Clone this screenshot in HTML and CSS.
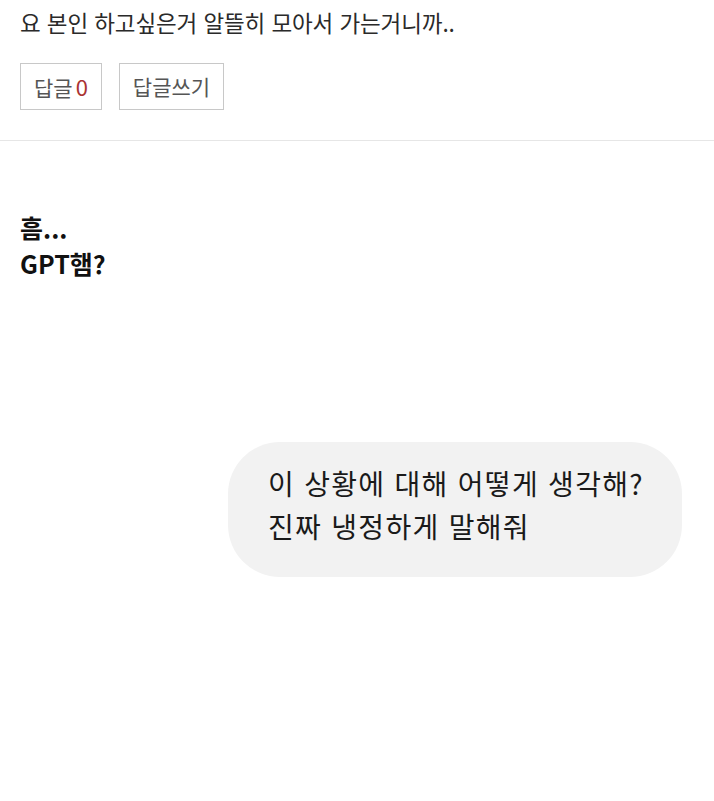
FILE: index.html
```html
<!DOCTYPE html>
<html lang="ko">
<head>
    <meta charset="UTF-8">
    <meta name="viewport" content="width=device-width, initial-scale=1.0">
    <title>답글</title>
    <link rel="stylesheet" href="styles.css">
</head>
<body>
    <div class="comment">
        <p class="comment-text">요 본인 하고싶은거 알뜰히 모아서 가는거니까..</p>
        <div class="comment-actions">
            <a href="#" class="btn">답글<span class="count">0</span></a>
            <a href="#" class="btn">답글쓰기</a>
        </div>
    </div>

    <div class="post">
        <p class="post-text">흠...<br>GPT햄?</p>

        <div class="chat">
            <div class="bubble">이 상황에 대해 어떻게 생각해?<br>진짜 냉정하게 말해줘</div>
        </div>
    </div>
</body>
</html>
```

FILE: styles.css
```css
html, body {
    margin: 0;
    padding: 0;
}
body {
    font-family: "Noto Sans CJK KR", "Noto Sans", sans-serif;
    background: white;
    color: #222;
}
.comment {
    padding: 0 20px;
    border-bottom: 1px solid #e6e6e6;
    height: 140px;
}
.comment-text {
    margin: 0;
    padding-top: 4px;
    font-size: 22.5px;
    line-height: 36px;
    color: #2a2a2a;
    letter-spacing: -0.1px;
}
.comment-actions {
    display: flex;
    gap: 17px;
    margin-top: 23px;
}
.btn {
    display: inline-block;
    height: 45px;
    line-height: 45px;
    padding: 0 13px;
    font-size: 21px;
    color: #555;
    border: 1px solid #c8c8c8;
    text-decoration: none;
}
.count {
    color: #a33;
    font-size: 22px;
    margin-left: 3px;
}
.post {
    padding: 68px 20px 0;
}
.post-text {
    margin: 0;
    font-size: 25px;
    font-weight: bold;
    line-height: 36px;
    color: #111;
}
.chat {
    display: flex;
    justify-content: flex-end;
    margin-top: 161px;
    padding-right: 12px;
}
.bubble {
    background: #f2f2f2;
    border-radius: 52px;
    padding: 20px 40px 29px;
    width: 374px;
    font-size: 28px;
    line-height: 43px;
    letter-spacing: 1.3px;
    color: #1a1a1a;
    white-space: nowrap;
}
```
